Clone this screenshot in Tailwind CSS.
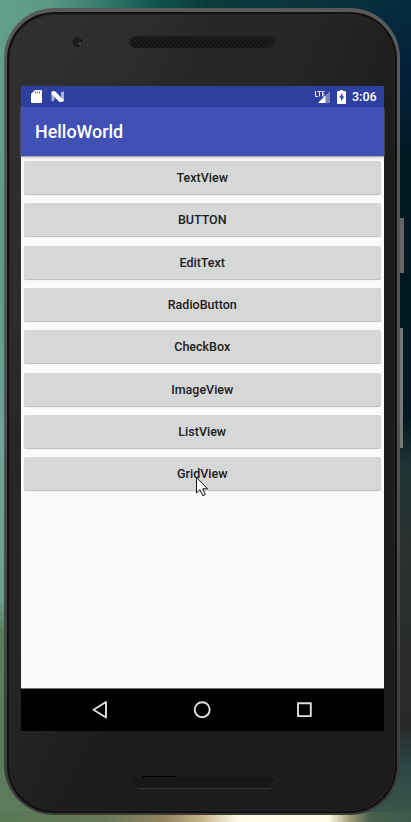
<!DOCTYPE html>
<html lang="en">
<head>
<meta charset="utf-8">
<title>HelloWorld</title>
<script src="https://cdn.jsdelivr.net/npm/@tailwindcss/browser@4"></script>
</head>
<body class="overflow-hidden font-[Roboto,sans-serif]">
<div class="relative isolate w-[411px] h-[822px] overflow-hidden pl-1 pt-2">
  <!-- wallpaper -->
  <svg class="absolute inset-0 -z-10" width="411" height="822" viewBox="0 0 411 822">
    <defs>
      <linearGradient id="top"><stop offset="0" stop-color="#63a08c"/><stop offset=".12" stop-color="#5a9885"/><stop offset=".25" stop-color="#357a6c"/><stop offset=".38" stop-color="#11544f"/><stop offset=".5" stop-color="#0a3b3c"/><stop offset=".72" stop-color="#0a353c"/><stop offset="1" stop-color="#052b3d"/></linearGradient>
      <linearGradient id="left" x2="0" y2="1"><stop offset="0" stop-color="#63a08c"/><stop offset=".3" stop-color="#5d9b8a"/><stop offset=".5" stop-color="#6ba698"/><stop offset=".71" stop-color="#66a08f"/><stop offset=".75" stop-color="#597c58"/><stop offset="1" stop-color="#5c7c5b"/></linearGradient>
      <linearGradient id="right" x2="0" y2="1"><stop offset="0" stop-color="#052b3d"/><stop offset=".08" stop-color="#041f3c"/><stop offset=".18" stop-color="#021922"/><stop offset=".5" stop-color="#03191f"/><stop offset=".56" stop-color="#1e3434"/><stop offset=".66" stop-color="#2b3030"/><stop offset=".88" stop-color="#292929"/><stop offset=".93" stop-color="#2b4746"/><stop offset="1" stop-color="#3b5a4b"/></linearGradient>
      <linearGradient id="bottom"><stop offset="0" stop-color="#587955"/><stop offset=".25" stop-color="#67785a"/><stop offset=".4" stop-color="#93845f"/><stop offset=".49" stop-color="#c5b48a"/><stop offset=".58" stop-color="#fffbe8"/><stop offset=".8" stop-color="#fffce8"/><stop offset=".85" stop-color="#a39d79"/><stop offset=".9" stop-color="#48604d"/><stop offset="1" stop-color="#3b5a4b"/></linearGradient>
    </defs>
    <rect width="411" height="200" fill="url(#top)"/>
    <rect y="60" width="60" height="762" fill="url(#left)"/>
    <rect x="350" y="12" width="61" height="810" fill="url(#right)"/>
    <rect y="812" width="411" height="10" fill="url(#bottom)"/>
  </svg>
  <!-- side buttons -->
  <div class="absolute left-[399px] top-[218px] w-[5px] h-[55px] bg-[#666]"></div>
  <div class="absolute left-[399px] top-[328px] w-[4px] h-[120px] bg-[#777]"></div>

  <!-- phone shell -->
  <div class="relative w-[396px] h-[807px] rounded-[50px] bg-linear-to-b from-[#5a5a5a] via-[#535353] to-[#3b3b3b] pt-[4px] px-[3px] pb-[2px]">
    <div class="h-full rounded-[47px] bg-[#111] p-[2px]">
      <div class="h-full rounded-[45px] bg-[linear-gradient(115deg,#303030_0%,#2d2d2d_18%,#272727_27%,#262626_40%,#1c1c1c_58%,#1c1c1c_100%)] border border-[#242424] px-[11px] flex flex-col">
        <div class="relative h-[71px] shrink-0">
          <svg class="absolute left-[44px] top-[14px]" width="220" height="26" viewBox="65 29 220 26">
            <defs><pattern id="mesh" width="4" height="4" patternUnits="userSpaceOnUse"><path d="M0 0h1v1H0zM2 2h1v1H2z" fill="#000"/></pattern></defs>
            <circle cx="77.500" cy="42" r="6.500" fill="#2a2a2a" stroke="#363636"/><circle cx="77.500" cy="42" r="4.500" fill="#1e1e1e"/><circle cx="80" cy="43.500" r="1" fill="#795963"/>
            <rect x="129" y="36" width="146" height="12" rx="6" fill="#1c1c1c"/><rect x="131" y="37" width="142" height="10" rx="5" fill="url(#mesh)"/>
          </svg>
        </div>

        <!-- screen -->
        <main class="w-[363px] h-[645px] shrink-0 flex flex-col bg-[#fafafa]">
          <div class="h-[21px] shrink-0 bg-[#2d3f9f] flex items-center pl-[10px] pr-[7px] text-white">
            <svg width="12" height="14" viewBox="31 90 12 14"><path d="M35 90h6q1 0 1 1v11q0 1-1 1h-9q-1 0-1-1v-8z" fill="#fff"/><path d="M35.500 91.500v2M37.500 91.500v2M39.500 91.500v2" stroke="#2d3f9f" stroke-opacity=".7"/></svg>
            <svg class="ml-2" width="14" height="12" viewBox="51 91 14 12"><path d="M51.500 91.500h3v9l-3 1zM61 92l3-.5v9l-3 1.500z" fill="#a9b2d8"/><path d="M51.500 92q1.500-1.500 4-.5l8.500 9q-1.500 2-4.500 1.500L51.500 94z" fill="#fff"/></svg>
            <svg class="ml-auto" width="17" height="14" viewBox="314 89 17 14"><path d="M330 90v12h-12z" fill="#7681c1"/><path d="M325.500 94.500v7.500h-7.500z" fill="#fff"/><path d="M314 89h10v7h-10z" fill="#2d3f9f"/><path d="M315.500 90v5.500h2.500M317.500 90.500h4M319.500 90v5.500M324.500 90.500h-2v4.500h2M322.500 93h2" fill="none" stroke="#e8ebf7"/></svg>
            <svg class="ml-[6px]" width="9" height="14" viewBox="337 89 9 14"><path d="M340 89h3v1h2q1 0 1 1v11q0 1-1 1h-7q-1 0-1-1V91q0-1 1-1h2z" fill="#fff"/><path d="M342.500 92l-3.500 4.500h2v3.500l3.500-4.500h-2z" fill="#2d3f9f"/></svg>
            <span class="ml-[6px] w-[25px] pt-[1px] text-[12.500px] leading-none font-medium whitespace-nowrap">3:06</span>
          </div>
          <header class="relative h-[49px] shrink-0 bg-[#4050b5] flex items-center pl-[14px] pt-[1px] shadow-[0_1px_1px_#aaa,0_4px_2px_-1px_#e6e6e6]">
            <h1 class="text-[17.900px] leading-5 font-medium text-white">HelloWorld</h1>
          </header>
          <div class="grow flex flex-col gap-[9.350px] pt-[5px] pl-[2.500px] pr-[3px] text-[12.500px] font-medium text-[#202020] *:h-[33px] *:pt-[1.500px] *:shrink-0 *:rounded-[2px] *:bg-[#d6d8d7] *:shadow-[0_1px_1px_#bbb]">
            <button>TextView</button>
            <button>BUTTON</button>
            <button>EditText</button>
            <button>RadioButton</button>
            <button>CheckBox</button>
            <button>ImageView</button>
            <button>ListView</button>
            <button>GridView</button>
          </div>
          <nav class="h-[43px] shrink-0 bg-black border-t border-[#777] grid grid-cols-3 px-[28px] items-center justify-items-center">
            <svg width="18" height="20" viewBox="0 0 18 20" fill="none" stroke="#e0e0e0" stroke-width="1.900" stroke-linejoin="round"><path d="M15 2v15.500L2.500 9.750z"/></svg>
            <svg width="20" height="20" viewBox="0 0 20 20" fill="none" stroke="#e0e0e0" stroke-width="1.900"><circle cx="10.200" cy="9.700" r="7.500"/></svg>
            <svg width="18" height="18" viewBox="0 0 18 18" fill="none" stroke="#e0e0e0" stroke-width="1.900" stroke-linejoin="round"><path d="M2 2.300h12.800v12.800h-12.800z"/></svg>
          </nav>
        </main>
        <div class="relative grow">
          <svg class="absolute left-[110px] top-[44px]" width="146" height="16" viewBox="131 775 146 16"><rect x="132.500" y="777" width="142" height="11.500" rx="5.750" fill="#1b1b1b"/><path d="M138 788.500h130q5 0 6.500-5.500" fill="none" stroke="#303030"/><rect x="134" y="777" width="139" height="10" rx="4" fill="url(#mesh)"/><path d="M142 776.500h34" stroke="#000"/></svg>
        </div>
      </div>
    </div>
  </div>
  <!-- mouse pointer -->
  <svg class="absolute left-[195px] top-[476px]" width="15" height="22" viewBox="195 476 15 22"><path d="M196.500 477.500v15.500l3.500-3.300 2.700 6 2.600-1.200-2.700-5.700h5z" fill="#fff" stroke="#111"/></svg>
</div>
</body>
</html>
